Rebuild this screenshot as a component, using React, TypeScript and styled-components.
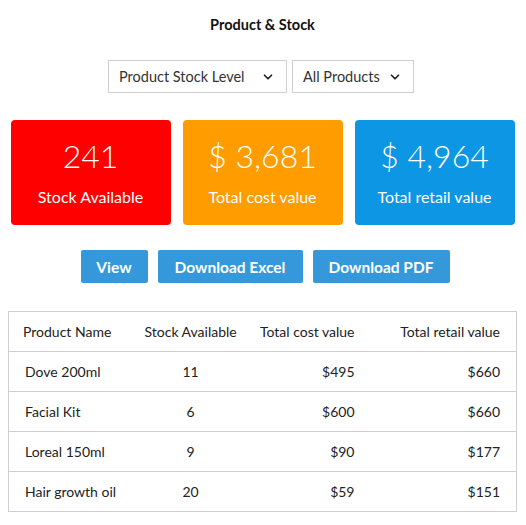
import styled, { createGlobalStyle } from "styled-components";
import { ChevronDown } from "lucide-react";

const GlobalStyle = createGlobalStyle`
  body {
    margin: 0;
    background: #fff;
    font-family: Lato, "Open Sans", sans-serif;
    color: #222;
  }
`;

const cards = [
  { value: "241", label: "Stock Available", color: "#ff0000" },
  { value: "$ 3,681", label: "Total cost value", color: "#ff9c00" },
  { value: "$ 4,964", label: "Total retail value", color: "#0d96e3" },
];

const rows = [
  { name: "Dove 200ml", stock: 11, cost: "$495", retail: "$660" },
  { name: "Facial Kit", stock: 6, cost: "$600", retail: "$660" },
  { name: "Loreal 150ml", stock: 9, cost: "$90", retail: "$177" },
  { name: "Hair growth oil", stock: 20, cost: "$59", retail: "$151" },
];

const App = () => {
  return (
    <Page>
      <GlobalStyle />
      <Title>Product &amp; Stock</Title>
      <Filters>
        <Select $width={179}>
          <span>Product Stock Level</span>
          <ChevronDown size={14} strokeWidth={3} />
        </Select>
        <Select $width={122}>
          <span>All Products</span>
          <ChevronDown size={14} strokeWidth={3} />
        </Select>
      </Filters>
      <Cards>
        {cards.map((c) => (
          <Card key={c.label} $bg={c.color}>
            <CardValue>{c.value}</CardValue>
            <CardLabel>{c.label}</CardLabel>
          </Card>
        ))}
      </Cards>
      <Actions>
        <Button $width={67}>View</Button>
        <Button $width={145}>Download Excel</Button>
        <Button $width={137}>Download PDF</Button>
      </Actions>
      <Table>
        <colgroup>
          <col style={{ width: 122 }} />
          <col style={{ width: 120 }} />
          <col style={{ width: 120 }} />
          <col />
        </colgroup>
        <thead>
          <tr>
            <Th $align="left">Product Name</Th>
            <Th $align="center">Stock Available</Th>
            <Th $align="right">Total cost value</Th>
            <Th $align="right">Total retail value</Th>
          </tr>
        </thead>
        <tbody>
          {rows.map((r) => (
            <tr key={r.name}>
              <Td $align="left">{r.name}</Td>
              <Td $align="center">{r.stock}</Td>
              <Td $align="right">{r.cost}</Td>
              <Td $align="right">{r.retail}</Td>
            </tr>
          ))}
        </tbody>
      </Table>
    </Page>
  );
};

export default App;

const Page = styled.div`
  width: 526px;
  padding: 17px 9px 0 8px;
  box-sizing: border-box;
  display: flex;
  flex-direction: column;
  align-items: center;
`;

const Title = styled.h1`
  margin: 0;
  font-size: 14.5px;
  font-weight: 700;
  color: #111;
  line-height: 16px;
`;

const Filters = styled.div`
  display: flex;
  gap: 5px;
  margin-top: 27px;
  margin-right: 3px;
`;

const Select = styled.div<{ $width: number }>`
  width: ${({ $width }) => $width}px;
  height: 33px;
  box-sizing: border-box;
  border: 1px solid #cfcfcf;
  display: flex;
  align-items: center;
  justify-content: space-between;
  padding: 0 11px 0 10px;
  font-size: 14.5px;
  color: #333;

  svg {
    color: #222;
  }
`;

const Cards = styled.div`
  display: flex;
  gap: 12px;
  margin-top: 27px;
`;

const Card = styled.div<{ $bg: string }>`
  width: 160px;
  height: 105px;
  border-radius: 4px;
  background: ${({ $bg }) => $bg};
  color: #fff;
  display: flex;
  flex-direction: column;
  align-items: center;
  padding-top: 16px;
  box-sizing: border-box;
`;

const CardValue = styled.div`
  font-size: 32px;
  font-weight: 300;
  line-height: 40px;
`;

const CardLabel = styled.div`
  font-size: 16px;
  margin-top: 11px;
  line-height: 20px;
`;

const Actions = styled.div`
  display: flex;
  gap: 10px;
  margin-top: 25px;
  margin-left: 5px;
`;

const Button = styled.button<{ $width: number }>`
  width: ${({ $width }) => $width}px;
  height: 33px;
  border: none;
  border-radius: 2px;
  background: #3498db;
  color: #fff;
  font-family: Lato, sans-serif;
  font-size: 15.5px;
  font-weight: 700;
  padding: 0;
  cursor: pointer;
`;

const Table = styled.table`
  width: 509px;
  margin-top: 28px;
  border-collapse: collapse;
  table-layout: fixed;
  border: 1px solid #cfcfcf;
  font-size: 14px;
  color: #222;
`;

const Th = styled.th<{ $align: string }>`
  font-weight: 400;
  text-align: ${({ $align }) => $align};
  height: 39px;
  padding: 0 ${({ $align }) => ($align === "right" ? "16px 0 2px" : "16px 0 14px")};
  border-bottom: 1px solid #cfcfcf;
  white-space: nowrap;
`;

const Td = styled.td<{ $align: string }>`
  text-align: ${({ $align }) => $align};
  height: 39px;
  padding: 0 16px;
  border-bottom: 1px solid #cfcfcf;
  white-space: nowrap;
`;
